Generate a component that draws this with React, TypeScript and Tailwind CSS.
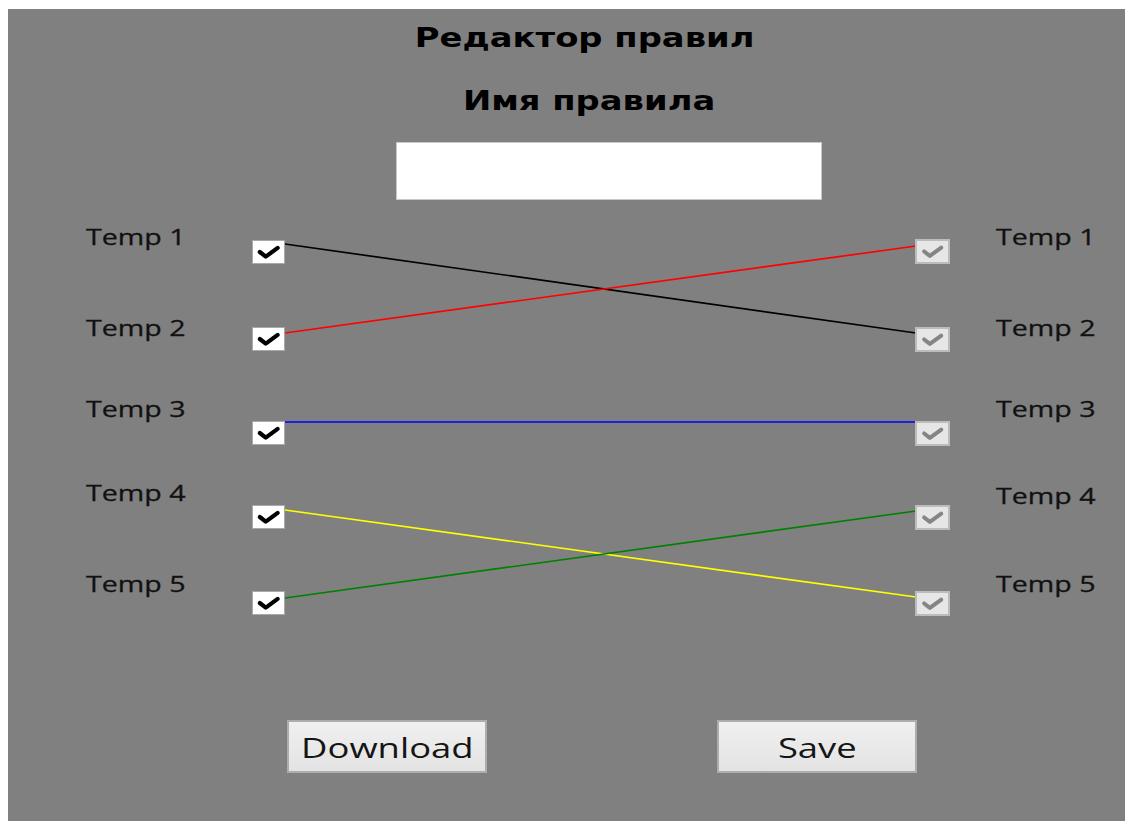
import React from "react";

type Row = {
  n: number;
  h: string;
  lBox: string;
  rBox: string;
  rLabel: string;
};

const rows: Row[] = [
  { n: 1, h: "h-[91px]", lBox: "mt-[17px]", rBox: "mt-[16px]", rLabel: "mt-0" },
  { n: 2, h: "h-[81px]", lBox: "mt-[13px]", rBox: "mt-[13px]", rLabel: "mt-0" },
  { n: 3, h: "h-[84px]", lBox: "mt-[26px]", rBox: "mt-[26px]", rLabel: "mt-0" },
  { n: 4, h: "h-[91px]", lBox: "mt-[26px]", rBox: "mt-[26px]", rLabel: "mt-[3px]" },
  { n: 5, h: "h-[50px]", lBox: "mt-[21px]", rBox: "mt-[21px]", rLabel: "mt-0" },
];

// connections between source and target channels
const links = [
  { x1: 277, y1: 21, x2: 908, y2: 110, color: "#000000" },
  { x1: 277, y1: 110, x2: 908, y2: 23, color: "#ff0000" },
  { x1: 277, y1: 199, x2: 908, y2: 199, color: "#0000ff" },
  { x1: 277, y1: 287, x2: 908, y2: 374, color: "#ffff00" },
  { x1: 277, y1: 375, x2: 908, y2: 288, color: "#008000" },
];

function Check({ enabled }: { enabled: boolean }) {
  return (
    <div
      className={
        enabled
          ? "relative w-[33px] h-[24px] bg-white border border-[#a9a9a9]"
          : "relative w-[35px] h-[25px] bg-[#e6e6e6] border-2 border-[#bcbcbc]"
      }
    >
      <svg viewBox="0 0 33 24" className="w-full h-full">
        <path
          d="M7 12 L13.5 17 L26.5 7.5"
          fill="none"
          stroke={enabled ? "#000000" : "#858585"}
          strokeWidth={4.6}
          strokeLinecap="round"
          strokeLinejoin="round"
        />
      </svg>
    </div>
  );
}

function Label({ text }: { text: string }) {
  return (
    <span
      className="inline-block origin-left scale-x-[1.3] text-[22px] leading-[26px] text-[#111111] [-webkit-text-stroke:0.3px_#111111]"
      style={{ fontFamily: '"Open Sans", "Noto Sans", sans-serif' }}
    >
      {text}
    </span>
  );
}

function Button({ text }: { text: string }) {
  return (
    <button className="w-[200px] h-[53px] border-2 border-[#adadad] bg-gradient-to-b from-[#f0f0f0] to-[#e3e3e3] flex items-center justify-center">
      <span
        className="inline-block scale-x-[1.3] text-[28px] leading-[34px] text-[#151515]"
        style={{ fontFamily: '"Open Sans", "Noto Sans", sans-serif' }}
      >
        {text}
      </span>
    </button>
  );
}

export default function App() {
  const heading = { fontFamily: '"DejaVu Sans", Verdana, sans-serif' };
  return (
    <div className="w-[1125px] h-[821px] bg-white pl-[8px] pt-[9px]">
      <div className="h-full bg-[#808080] flex flex-col pt-[13px]">
        <div className="text-center pl-[37px]">
          <span
            className="inline-block scale-x-[1.3] font-bold text-[26px] leading-[32px] text-black"
            style={heading}
          >
            Редактор правил
          </span>
        </div>
        <div className="text-center pl-[45px] mt-[31px]">
          <span
            className="inline-block scale-x-[1.3] font-bold text-[26px] leading-[32px] text-black"
            style={heading}
          >
            Имя правила
          </span>
        </div>
        <input
          type="text"
          className="ml-[388px] mt-[25px] w-[426px] h-[58px] bg-white border border-[#c8c8c8] outline-none"
        />

        <div className="relative mt-[23px]">
          <svg
            className="absolute inset-0 w-full h-full overflow-visible pointer-events-none"
            width="1117"
            height="397"
          >
            {links.map((l, i) => (
              <line
                key={i}
                x1={l.x1}
                y1={l.y1}
                x2={l.x2}
                y2={l.y2}
                stroke={l.color}
                strokeWidth={1.7}
              />
            ))}
          </svg>
          {rows.map((r) => (
            <div key={r.n} className={`flex items-start pl-[78px] ${r.h}`}>
              <div className="w-[166px]">
                <Label text={`Temp ${r.n}`} />
              </div>
              <div className={r.lBox}>
                <Check enabled />
              </div>
              <div className="w-[630px]" />
              <div className={r.rBox}>
                <Check enabled={false} />
              </div>
              <div className={`ml-[46px] ${r.rLabel}`}>
                <Label text={`Temp ${r.n}`} />
              </div>
            </div>
          ))}
        </div>

        <div className="flex pl-[279px] gap-[230px] mt-[100px]">
          <Button text="Download" />
          <Button text="Save" />
        </div>
      </div>
    </div>
  );
}
